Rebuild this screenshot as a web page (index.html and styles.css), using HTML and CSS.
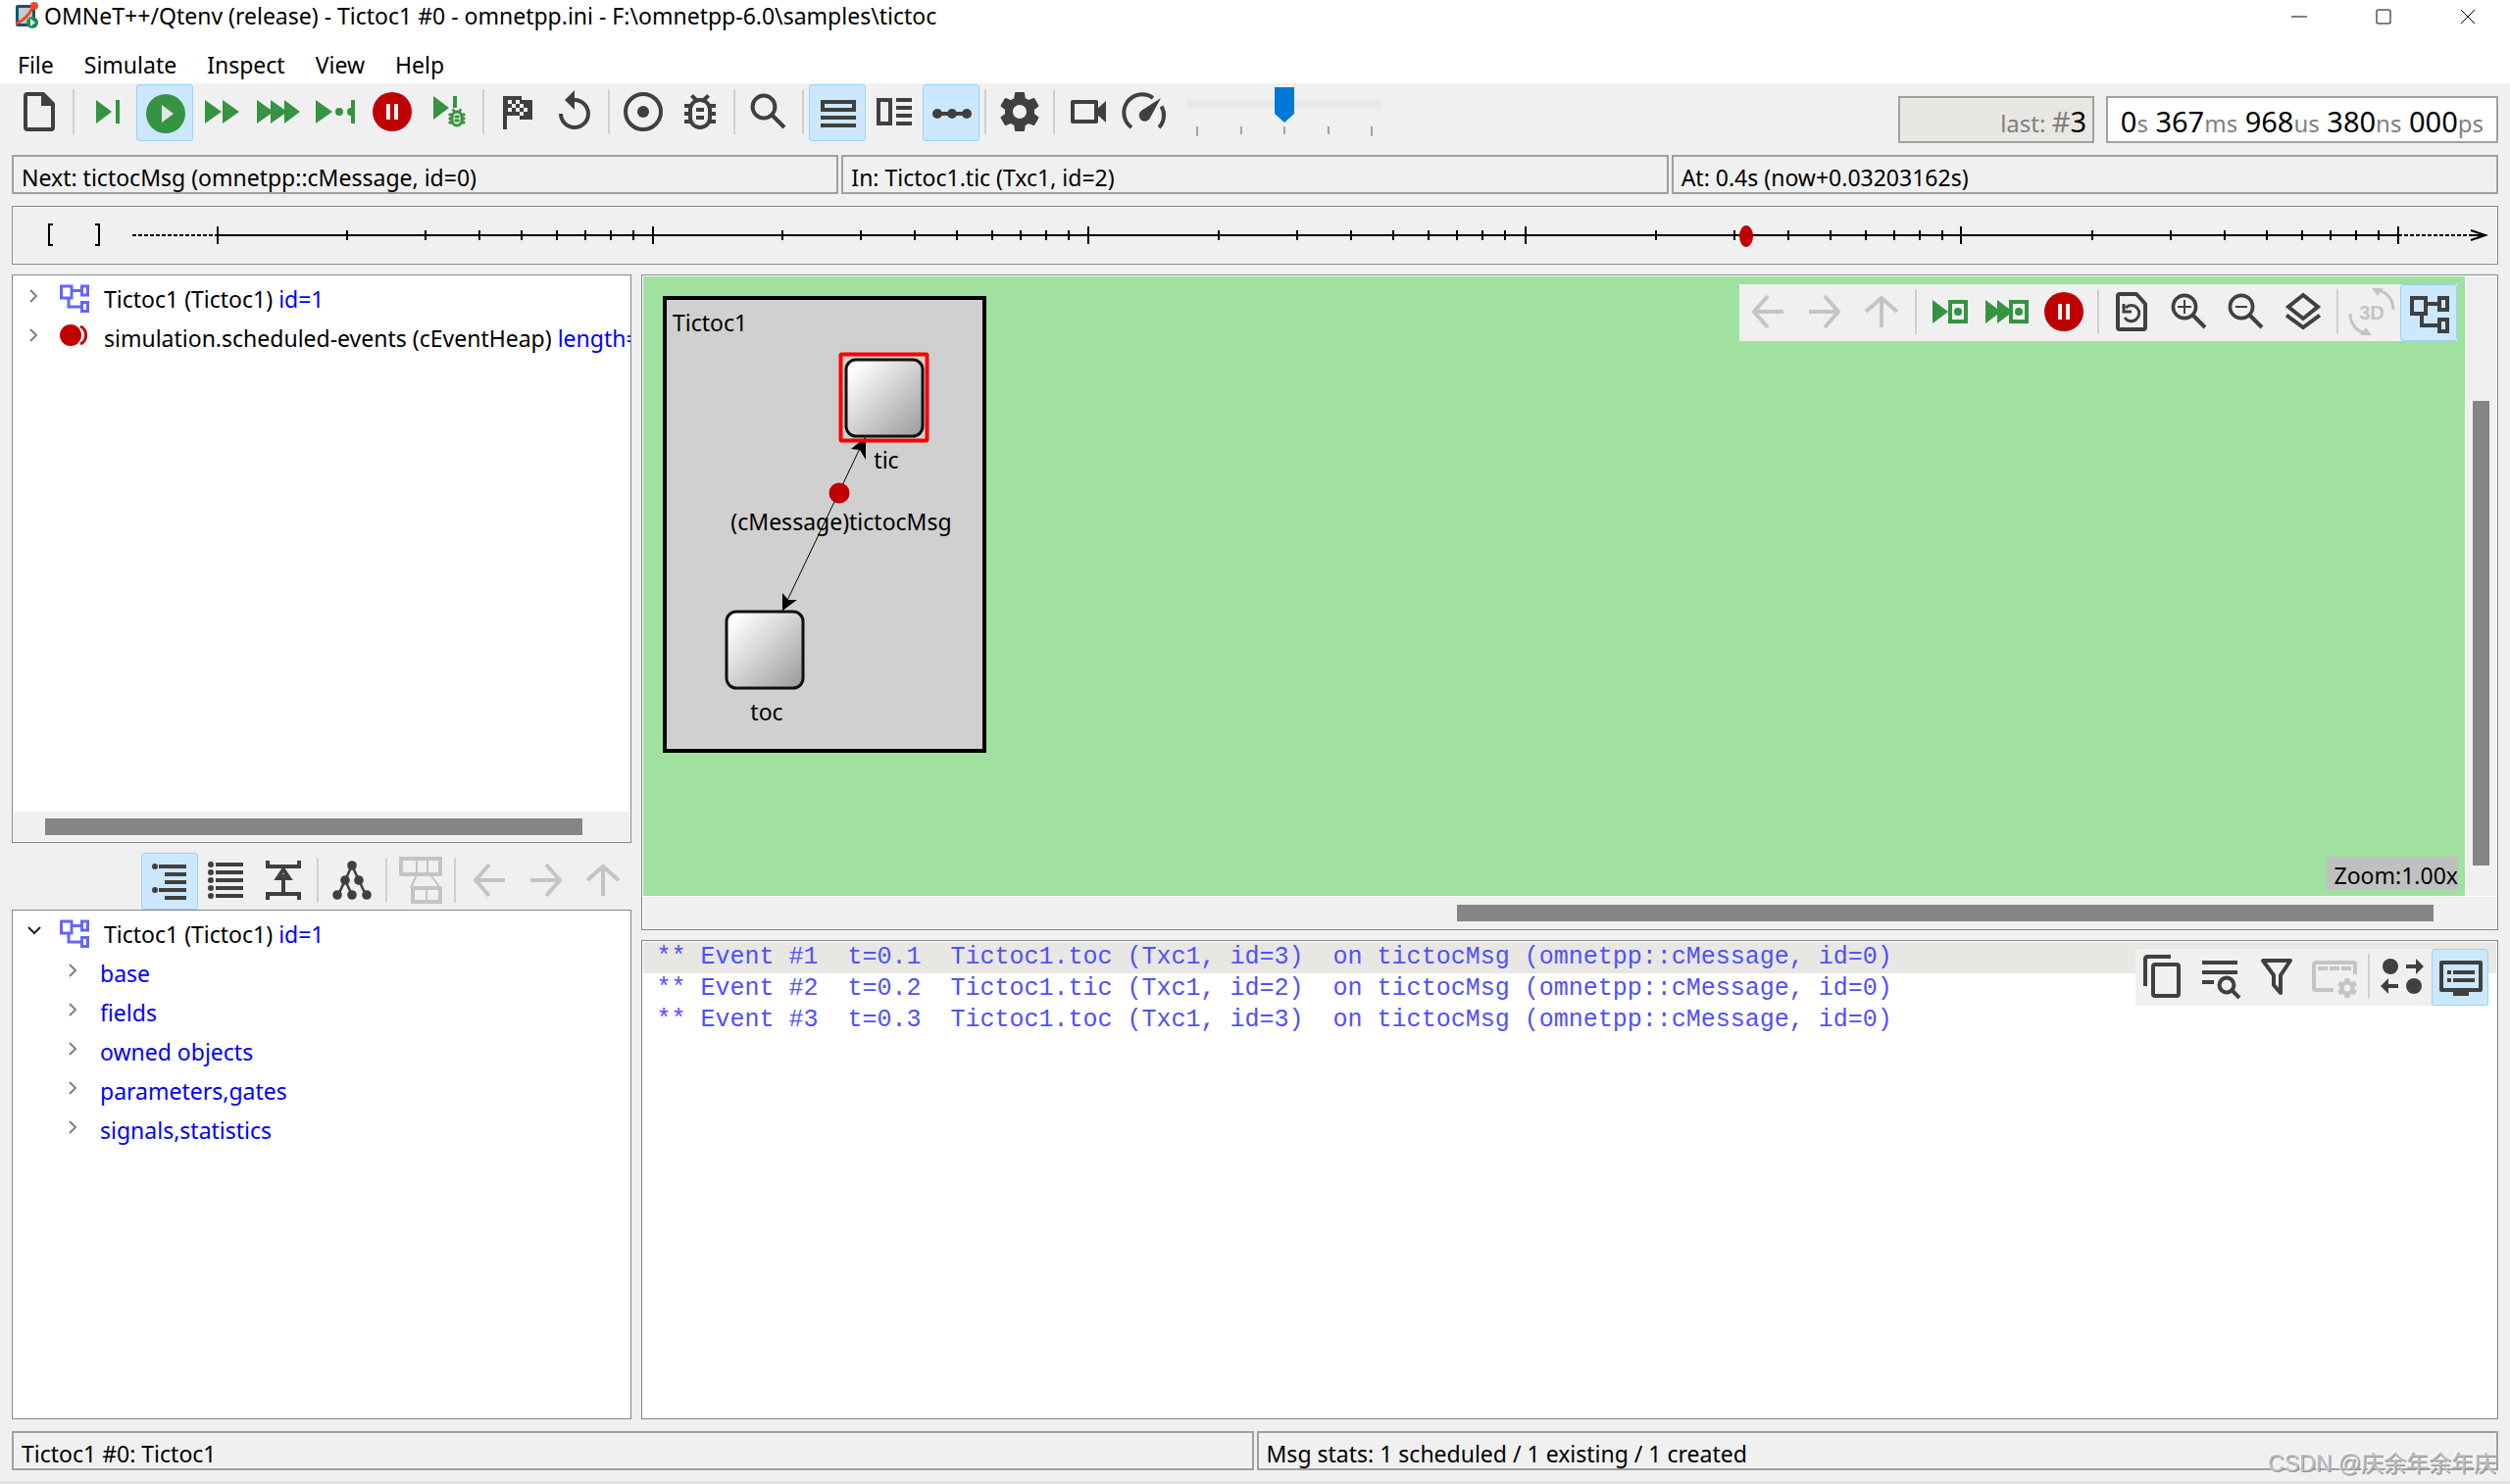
FILE: index.html
```html
<!DOCTYPE html>
<html lang="en">
<head>
<meta charset="utf-8">
<title>OMNeT++/Qtenv (release) - Tictoc1 #0</title>
<link rel="stylesheet" href="styles.css">
</head>
<body>
<svg class="defs" aria-hidden="true">
  <defs>
    <symbol id="module" viewBox="0 0 24 24"><path fill="none" stroke="currentColor" stroke-width="2" d="M3 4h7v8H3zM17 4h4v6h-4zM17 15h4v6h-4zM10 7h7M8 12v6h9"/></symbol>
    <symbol id="back" viewBox="0 0 24 24"><path fill="none" stroke="currentColor" stroke-width="2" d="M20 12H5M12 4l-7 8 7 8"/></symbol>
    <symbol id="forward" viewBox="0 0 24 24"><path fill="none" stroke="currentColor" stroke-width="2" d="M4 12h15M12 4l7 8-7 8"/></symbol>
    <symbol id="up" viewBox="0 0 24 24"><path fill="none" stroke="currentColor" stroke-width="2" d="M12 20V5M4 12l8-7 8 7"/></symbol>
    <symbol id="stop" viewBox="0 0 24 24"><circle cx="12" cy="12" r="10" fill="#c00000"/><path fill="#f0f0f0" d="M9 8h2v8H9zM13 8h2v8h-2z"/></symbol>
    <symbol id="gear" viewBox="0 0 24 24"><path fill="currentColor" d="M19.43 12.98c.04-.32.07-.64.07-.98s-.03-.66-.07-.98l2.11-1.65c.19-.15.24-.42.12-.64l-2-3.46c-.12-.22-.39-.3-.61-.22l-2.49 1c-.52-.4-1.08-.73-1.69-.98l-.38-2.65C14.46 2.18 14.25 2 14 2h-4c-.25 0-.46.18-.49.42l-.38 2.65c-.61.25-1.17.59-1.69.98l-2.49-1c-.23-.09-.49 0-.61.22l-2 3.46c-.13.22-.07.49.12.64l2.11 1.65c-.04.32-.07.65-.07.98s.03.66.07.98l-2.11 1.65c-.19.15-.24.42-.12.64l2 3.46c.12.22.39.3.61.22l2.49-1c.52.4 1.08.73 1.69.98l.38 2.65c.03.24.24.42.49.42h4c.25 0 .46-.18.49-.42l.38-2.65c.61-.25 1.17-.59 1.69-.98l2.49 1c.23.09.49 0 .61-.22l2-3.46c.12-.22.07-.49-.12-.64l-2.11-1.65zM12 15.5c-1.93 0-3.5-1.57-3.5-3.5s1.57-3.5 3.5-3.5 3.5 1.57 3.5 3.5-1.57 3.5-3.5 3.5z"/></symbol>
    <symbol id="bug" viewBox="0 0 24 24"><path fill="currentColor" d="M20 8h-2.81c-.45-.78-1.07-1.45-1.82-1.96L17 4.41 15.59 3l-2.17 2.17C12.96 5.06 12.49 5 12 5s-.96.06-1.41.17L8.41 3 7 4.41l1.62 1.63C7.88 6.55 7.26 7.22 6.81 8H4v2h2.09c-.05.33-.09.66-.09 1v1H4v2h2v1c0 .34.04.67.09 1H4v2h2.81c1.04 1.79 2.97 3 5.19 3s4.15-1.21 5.19-3H20v-2h-2.09c.05-.33.09-.66.09-1v-1h2v-2h-2v-1c0-.34-.04-.67-.09-1H20V8zm-4 7c0 2.21-1.79 4-4 4s-4-1.79-4-4v-4c0-2.21 1.79-4 4-4s4 1.79 4 4v4zm-6-1h4v2h-4v-2zm0-4h4v2h-4v-2z"/></symbol>
    <symbol id="chevron" viewBox="0 0 16 16"><path fill="none" stroke="currentColor" stroke-width="2" d="M4 2l6 6-6 6"/></symbol>
  </defs>
</svg>

<header class="titlebar">
  <svg class="app-icon" viewBox="0 0 26 28" aria-hidden="true"><rect x="2" y="3" width="20" height="22" rx="2" fill="#10556f"/><rect x="5" y="6" width="14" height="16" fill="#c4ccc8"/><path d="M2 22Q14 18 20 4" stroke="#f0452b" stroke-width="3" fill="none"/><circle cx="21" cy="4" r="4" fill="#f0452b"/><circle cx="19" cy="21" r="6" fill="#1d8a5c"/><path d="M17 17l5 4-5 4z" fill="#e8f4ec"/></svg>
  <h1 class="title">OMNeT++/Qtenv (release) - Tictoc1 #0 - omnetpp.ini - F:\omnetpp-6.0\samples\tictoc</h1>
  <div class="window-controls">
    <button aria-label="Minimize"><svg viewBox="0 0 16 16"><path d="M0 8h16"/></svg></button>
    <button aria-label="Maximize"><svg viewBox="0 0 16 16"><rect x="1" y="1" width="14" height="14" rx="1"/></svg></button>
    <button aria-label="Close"><svg viewBox="0 0 16 16"><path d="M1 1l14 14M15 1L1 15"/></svg></button>
  </div>
</header>

<nav class="menubar">
  <button>File</button><button>Simulate</button><button>Inspect</button><button>View</button><button>Help</button>
</nav>

<div class="topbar">
  <div class="toolbar">
    <button class="tool" aria-label="New run"><svg viewBox="0 0 24 24"><path fill="none" stroke="currentColor" stroke-width="2" stroke-linejoin="round" d="M14 3H6a1 1 0 0 0-1 1v16a1 1 0 0 0 1 1h12a1 1 0 0 0 1-1V8z"/><path fill="currentColor" d="M13 3v6h6z"/></svg></button>
    <span class="sep"></span>
    <button class="tool go" aria-label="Step"><svg viewBox="0 0 24 24"><path fill="currentColor" d="M6 18l8-6-8-6zM16 6h2v12h-2z"/></svg></button>
    <button class="tool go active" aria-label="Run"><svg viewBox="0 0 24 24"><circle cx="12" cy="12" r="10" fill="currentColor"/><path fill="#e4e4e4" d="M10 7.500l6 4.500-6 4.500z"/></svg></button>
    <button class="tool go" aria-label="Fast run"><svg viewBox="0 0 24 24"><path fill="currentColor" d="M3.500 18l8.500-6-8.500-6zM12.500 18l8.500-6-8.500-6z"/></svg></button>
    <button class="tool go" aria-label="Express run"><svg viewBox="0 0 24 24"><path fill="currentColor" d="M1 18l8.500-6L1 6zM8 18l8.500-6L8 6zM15 18l8-6-8-6z"/></svg></button>
    <button class="tool go" aria-label="Run until"><svg viewBox="0 0 24 24"><path fill="currentColor" d="M2 18l8.500-6L2 6zM20 6h2v12h-2v-4a2 2 0 0 1 0-4z"/><circle cx="14" cy="12" r="2" fill="currentColor"/></svg></button>
    <button class="tool" aria-label="Stop"><svg><use href="#stop"/></svg></button>
    <button class="tool go" aria-label="Debug next event"><svg viewBox="0 0 24 24"><path fill="currentColor" d="M4 16l8-6-8-6zM14 4h2v6h-2z"/><use href="#bug" x="10" y="9" width="12" height="12" stroke="currentColor" stroke-width="1"/></svg></button>
    <span class="sep"></span>
    <button class="tool" aria-label="Conclude simulation"><svg viewBox="0 0 24 24"><path fill="currentColor" d="M4.500 4H14v2h5.500v10H13v-2H6.500v7h-2z"/><path fill="#f0f0f0" d="M7 6h2v2H7zM11 6h2v2h-2zM9 8h2v2H9zM13 8h2v2h-2zM7 10h2v2H7zM11 10h2v2h-2zM15 10h2v2h-2zM13 12h2v2h-2z"/></svg></button>
    <button class="tool" aria-label="Rebuild network"><svg viewBox="0 0 24 24"><path fill="currentColor" d="M12 5V1L7 6l5 5V7c3.310 0 6 2.690 6 6s-2.690 6-6 6-6-2.690-6-6H4c0 4.420 3.580 8 8 8s8-3.580 8-8-3.580-8-8-8z"/></svg></button>
    <span class="sep"></span>
    <button class="tool" aria-label="Record event log"><svg viewBox="0 0 24 24"><circle cx="12" cy="12" r="9" fill="none" stroke="currentColor" stroke-width="2"/><circle cx="12" cy="12" r="3" fill="currentColor"/></svg></button>
    <button class="tool" aria-label="Debug on errors"><svg><use href="#bug"/></svg></button>
    <span class="sep"></span>
    <button class="tool" aria-label="Find"><svg viewBox="0 0 24 24"><path fill="none" stroke="currentColor" stroke-width="2" d="M14 14l6 6"/><circle cx="9.500" cy="9.500" r="5.700" fill="none" stroke="currentColor" stroke-width="2"/></svg></button>
    <span class="sep"></span>
    <button class="tool active" aria-label="Horizontal layout"><svg viewBox="0 0 24 24"><path fill="none" stroke="currentColor" stroke-width="2" d="M4 6h16v4H4zM3 14h18M3 18h18"/></svg></button>
    <button class="tool" aria-label="Vertical layout"><svg viewBox="0 0 24 24"><path fill="none" stroke="currentColor" stroke-width="2" d="M4 6h6v12H4zM13 6h8M13 10h8M13 14h8M13 18h8"/></svg></button>
    <button class="tool active" aria-label="Show timeline"><svg viewBox="0 0 24 24"><path stroke="currentColor" stroke-width="2" d="M3 12h18"/><g fill="currentColor"><circle cx="4.500" cy="12" r="2.500"/><circle cx="12" cy="12" r="2.500"/><circle cx="19.500" cy="12" r="2.500"/></g></svg></button>
    <span class="sep"></span>
    <button class="tool" aria-label="Preferences"><svg><use href="#gear"/></svg></button>
    <span class="sep"></span>
    <button class="tool" aria-label="Record video"><svg viewBox="0 0 24 24"><path fill="none" stroke="currentColor" stroke-width="2" stroke-linejoin="round" d="M4 7h12v10H4z"/><path fill="currentColor" d="M16 11l5-4.500v11L16 13z"/></svg></button>
    <button class="tool" aria-label="Animation parameters"><svg viewBox="0 0 24 24"><path fill="none" stroke="currentColor" stroke-width="2" d="M5 20A9 9 0 0 1 16 4.900M20.300 9.200A9 9 0 0 1 19 20"/><path fill="currentColor" d="M20 5l-5.300 9.800a3 3 0 1 1-4.400-3.500z"/></svg></button>
    <div class="speed">
      <input type="range" min="0" max="4" step="1" value="2" aria-label="Animation speed">
      <div class="ticks"><i></i><i></i><i></i><i></i><i></i></div>
    </div>
  </div>
  <div class="counters">
    <output class="counter last"><small>last: </small><span>#</span>3</output>
    <output class="counter time">0<small>s</small> 367<small>ms</small> 968<small>us</small> 380<small>ns</small> 000<small>ps</small></output>
  </div>
</div>

<div class="inforow three">
  <div class="field">Next: tictocMsg (omnetpp::cMessage, id=0)</div>
  <div class="field">In: Tictoc1.tic (Txc1, id=2)</div>
  <div class="field">At: 0.4s (now+0.03203162s)</div>
</div>

<div class="timeline">
  <svg viewBox="0 0 2534 58" preserveAspectRatio="none" role="img" aria-label="Future events timeline">
    <path fill="none" stroke="#000" stroke-width="2" d="M41 18h-4v21h4M84 18h4v21h-4"/>
    <path stroke="#000" stroke-width="2" stroke-dasharray="4 2" d="M122 29H209M2433 29H2512"/>
    <path fill="none" stroke="#000" stroke-width="2" d="M209 29H2433M2507 24l15 5-15 5M2508 29h12"/>
    <path stroke="#000" stroke-width="2" d="M209 20v18M653 20v18M1097 20v18M1543 20v18M1987 20v18M2433 20v18"/>
    <path id="decade" stroke="#000" stroke-width="2" d="M341 24v10M421 24v10M476 24v10M519 24v10M555 24v10M584 24v10M610 24v10M633 24v10"/>
    <use href="#decade" x="444"/><use href="#decade" x="889"/><use href="#decade" x="1335"/><use href="#decade" x="1780"/>
    <ellipse cx="1768" cy="30" rx="7" ry="11" fill="#c00000"/>
  </svg>
</div>

<main class="workspace">
  <section class="side">
    <div class="panel objects">
      <ul class="tree">
        <li><button class="twist" aria-label="Expand"><svg><use href="#chevron"/></svg></button><svg class="kind"><use href="#module"/></svg><span>Tictoc1 (Tictoc1) <b>id=1</b></span></li>
        <li><button class="twist" aria-label="Expand"><svg><use href="#chevron"/></svg></button><svg class="kind" viewBox="0 0 36 36"><circle cx="14" cy="16" r="11" fill="#c00000"/><path d="M24 7a10 10 0 0 1 0 18" fill="none" stroke="#c00000" stroke-width="3"/></svg><span>simulation.scheduled-events (cEventHeap) <b>length=1</b></span></li>
      </ul>
      <div class="hscroll"><div class="thumb"></div></div>
    </div>
    <div class="toolbar side-tools">
      <button class="tool active" aria-label="Grouped mode"><svg viewBox="0 0 24 24"><path fill="none" stroke="currentColor" stroke-width="2" d="M6 4h14M9 8h11M9 12h11M6 16h14M9 20h11"/><circle cx="4" cy="4" r="1.500" fill="currentColor"/><circle cx="4" cy="16" r="1.500" fill="currentColor"/></svg></button>
      <button class="tool" aria-label="Flat mode"><svg viewBox="0 0 24 24"><path fill="none" stroke="currentColor" stroke-width="2" d="M6.500 4h14M6.500 8h14M6.500 12h14M6.500 16h14M6.500 20h14"/><g fill="currentColor"><circle cx="4" cy="4" r="1.500"/><circle cx="4" cy="8" r="1.500"/><circle cx="4" cy="12" r="1.500"/><circle cx="4" cy="16" r="1.500"/><circle cx="4" cy="20" r="1.500"/></g></svg></button>
      <button class="tool" aria-label="Children mode"><svg viewBox="0 0 24 24"><path fill="none" stroke="currentColor" stroke-width="2" d="M4 2v3h16V2M4 22v-3h16v3M12 9v10M12 6.500L9 11h6z"/></svg></button>
      <span class="sep"></span>
      <button class="tool" aria-label="Inheritance mode"><svg viewBox="0 0 24 24"><path fill="none" stroke="currentColor" stroke-width="1.300" d="M12 4.500L8.500 12 5 19.500M12 4.500l3.500 7.500 3.500 7.500M8.500 12l3.500 7.500"/><g fill="currentColor"><circle cx="12" cy="4.500" r="2.400"/><circle cx="8.500" cy="12" r="2.400"/><circle cx="15.500" cy="12" r="2.400"/><circle cx="4.500" cy="19.500" r="2.400"/><circle cx="12" cy="19.500" r="2.400"/><circle cx="19.500" cy="19.500" r="2.400"/></g></svg></button>
      <span class="sep"></span>
      <button class="tool" disabled aria-label="Packet mode"><svg viewBox="0 0 24 24"><path fill="none" stroke="currentColor" stroke-width="2" d="M2 1h20v8H2zM8 16h14v7H8z"/><path fill="none" stroke="currentColor" d="M10 1v8M15.500 1v8M15 16v7M10 9l-3 7M17 9l5 7"/></svg></button>
      <span class="sep"></span>
      <button class="tool" disabled aria-label="Back"><svg><use href="#back"/></svg></button>
      <button class="tool" disabled aria-label="Forward"><svg><use href="#forward"/></svg></button>
      <button class="tool" disabled aria-label="Up"><svg><use href="#up"/></svg></button>
    </div>
    <div class="panel details">
      <ul class="tree">
        <li class="open"><button class="twist" aria-label="Collapse"><svg><use href="#chevron"/></svg></button><svg class="kind"><use href="#module"/></svg><span>Tictoc1 (Tictoc1) <b>id=1</b></span></li>
        <li class="child"><button class="twist" aria-label="Expand"><svg><use href="#chevron"/></svg></button><b>base</b></li>
        <li class="child"><button class="twist" aria-label="Expand"><svg><use href="#chevron"/></svg></button><b>fields</b></li>
        <li class="child"><button class="twist" aria-label="Expand"><svg><use href="#chevron"/></svg></button><b>owned objects</b></li>
        <li class="child"><button class="twist" aria-label="Expand"><svg><use href="#chevron"/></svg></button><b>parameters,gates</b></li>
        <li class="child"><button class="twist" aria-label="Expand"><svg><use href="#chevron"/></svg></button><b>signals,statistics</b></li>
      </ul>
    </div>
  </section>

  <section class="content">
    <div class="panel network">
      <div class="canvas">
        <svg class="diagram" viewBox="0 0 370 500" role="img" aria-label="Tictoc1 network">
          <defs>
            <linearGradient id="box" x1="0" y1="0" x2="1" y2="1"><stop offset=".1" stop-color="#fff"/><stop offset="1" stop-color="#999"/></linearGradient>
          </defs>
          <rect x="22" y="22" width="326" height="462" fill="#d0d0d0" stroke="#000" stroke-width="4"/>
          <g fill="url(#box)" stroke="#111" stroke-width="3"><rect x="207" y="85" width="78" height="78" rx="10"/><rect x="85" y="342" width="78" height="78" rx="10"/></g>
          <path stroke="#000" stroke-width="1" d="M142 341L226 165"/>
          <path d="M227 164l-15 12 9 1 6 10zM142 341l0-18 6 7 9 0z"/>
          <rect x="201.500" y="79.500" width="88" height="88" rx="1" fill="none" stroke="#f00" stroke-width="4"/>
          <circle cx="200" cy="221" r="10.500" fill="#c00000"/>
          <g class="labels"><text x="30" y="56">Tictoc1</text><text x="248" y="196" text-anchor="middle">tic</text><text x="202" y="259" text-anchor="middle">(cMessage)tictocMsg</text><text x="126" y="453" text-anchor="middle">toc</text></g>
        </svg>
        <div class="toolbar floating">
          <button class="tool" disabled aria-label="Back"><svg><use href="#back"/></svg></button>
          <button class="tool" disabled aria-label="Forward"><svg><use href="#forward"/></svg></button>
          <button class="tool" disabled aria-label="Up"><svg><use href="#up"/></svg></button>
          <span class="sep"></span>
          <button class="tool go" aria-label="Run until next event in module"><svg viewBox="0 0 24 24"><path fill="currentColor" d="M3 18l8-6-8-6z"/><path fill="none" stroke="currentColor" stroke-width="2" d="M12 7h8v10h-8z"/><circle cx="16" cy="12" r="2" fill="currentColor"/></svg></button>
          <button class="tool go" aria-label="Fast run in module"><svg viewBox="0 0 24 24"><path fill="currentColor" d="M1 18l8-6-8-6zM7 18l8-6-8-6z"/><path fill="none" stroke="currentColor" stroke-width="2" d="M14 7h8v10h-8z"/><circle cx="18" cy="12" r="2" fill="currentColor"/></svg></button>
          <button class="tool" aria-label="Stop"><svg><use href="#stop"/></svg></button>
          <span class="sep"></span>
          <button class="tool" aria-label="Relayout"><svg viewBox="0 0 24 24"><path fill="none" stroke="currentColor" stroke-width="2" stroke-linejoin="round" d="M14 3H5.500A1 1 0 0 0 4.500 4v16a1 1 0 0 0 1 1h12a1 1 0 0 0 1-1V8z"/><path fill="none" stroke="currentColor" stroke-width="1.500" d="M8.500 10a4 4 0 1 1-.5 5M7.500 8v4h4"/></svg></button>
          <button class="tool" aria-label="Zoom in"><svg viewBox="0 0 24 24"><circle cx="9.500" cy="9.500" r="5.800" fill="none" stroke="currentColor" stroke-width="1.800"/><path fill="none" stroke="currentColor" stroke-width="2" d="M14 14l6 6"/><path stroke="currentColor" d="M6 9.500h7M9.500 6v7"/></svg></button>
          <button class="tool" aria-label="Zoom out"><svg viewBox="0 0 24 24"><circle cx="9.500" cy="9.500" r="5.800" fill="none" stroke="currentColor" stroke-width="1.800"/><path fill="none" stroke="currentColor" stroke-width="2" d="M14 14l6 6"/><path stroke="currentColor" d="M6.500 9.500h6"/></svg></button>
          <button class="tool" aria-label="Layers"><svg viewBox="0 0 24 24"><path fill="none" stroke="currentColor" stroke-width="2" d="M12 3.500L19.500 9.500 12 15.500 4.500 9.500zM3.500 13.800L12 20l8.500-6.200"/></svg></button>
          <span class="sep"></span>
          <button class="tool" disabled aria-label="3D view"><svg viewBox="0 0 24 24"><path fill="none" stroke="currentColor" stroke-width="1.500" d="M1 13c0 5 3 9 8 10M23 11c0-5-3-9-8-10"/><path fill="currentColor" d="M12 0h6l-3 4zM12 24H6l3-4z"/><text class="three-d" x="12" y="16" text-anchor="middle">3D</text></svg></button>
          <button class="tool active" aria-label="Network view"><svg><use href="#module"/></svg></button>
        </div>
        <div class="zoom-label">Zoom:1.00x</div>
      </div>
      <div class="vscroll"><div class="thumb"></div></div>
      <div class="hscroll"><div class="thumb"></div></div>
    </div>
    <div class="panel log">
      <pre class="line current">** Event #1  t=0.1  Tictoc1.toc (Txc1, id=3)  on tictocMsg (omnetpp::cMessage, id=0)</pre>
      <pre class="line">** Event #2  t=0.2  Tictoc1.tic (Txc1, id=2)  on tictocMsg (omnetpp::cMessage, id=0)</pre>
      <pre class="line">** Event #3  t=0.3  Tictoc1.toc (Txc1, id=3)  on tictocMsg (omnetpp::cMessage, id=0)</pre>
      <div class="toolbar floating">
        <button class="tool" aria-label="Copy"><svg viewBox="0 0 24 24"><path fill="none" stroke="currentColor" stroke-width="2" stroke-linejoin="round" d="M15.500 2h-12a1 1 0 0 0-1 1v14M7.500 6h11a1 1 0 0 1 1 1v14a1 1 0 0 1-1 1h-11a1 1 0 0 1-1-1V7a1 1 0 0 1 1-1z"/></svg></button>
        <button class="tool" aria-label="Find in log"><svg viewBox="0 0 24 24"><path fill="none" stroke="currentColor" stroke-width="2" d="M2.500 5h18M2.500 10h18M2.500 15h6"/><circle cx="15" cy="16.500" r="5.500" fill="#f0f0f0"/><circle cx="15" cy="16.500" r="3.700" fill="none" stroke="currentColor" stroke-width="2"/><path stroke="currentColor" stroke-width="2" d="M17.500 19l4 4"/></svg></button>
        <button class="tool" aria-label="Filter"><svg viewBox="0 0 24 24"><path fill="none" stroke="currentColor" stroke-width="2" stroke-linejoin="round" d="M4.500 4h14L13.500 11.500V20.500L10 16.500v-5z"/></svg></button>
        <button class="tool" disabled aria-label="Configure columns"><svg viewBox="0 0 24 24"><path fill="none" stroke="currentColor" stroke-width="2" d="M11.500 19H2.500a1 1 0 0 1-1-1V6a1 1 0 0 1 1-1h19a1 1 0 0 1 1 1v5"/><path stroke="currentColor" stroke-width="2" stroke-dasharray="5 1" d="M3.500 8h17"/><use href="#gear" x="12.500" y="12" width="12" height="12"/></svg></button>
        <span class="sep"></span>
        <button class="tool" aria-label="Message view"><svg viewBox="0 0 24 24"><g fill="currentColor"><circle cx="5.500" cy="7" r="4"/><circle cx="17.500" cy="17" r="4"/><path d="M13.500 6h5V3l4 4-4 4V8h-5zM9.500 16h-5v-3l-4 4 4 4v-3h5z"/></g></svg></button>
        <button class="tool active" aria-label="Log view"><svg viewBox="0 0 24 24"><path fill="none" stroke="currentColor" stroke-width="2" stroke-linejoin="round" d="M2 4h20v14H2z"/><path fill="none" stroke="currentColor" stroke-width="2" d="M5 9h2M8 9h11M5 13h2M8 13h11M8 20h8"/></svg></button>
      </div>
    </div>
  </section>
</main>

<footer class="inforow status">
  <div class="field">Tictoc1 #0: Tictoc1</div>
  <div class="field">Msg stats: 1 scheduled / 1 existing / 1 created</div>
  <div class="watermark">CSDN @庆余年余年庆</div>
</footer>
</body>
</html>
```
FILE: styles.css
```css
* { box-sizing: border-box; }

body {
  margin: 0;
  min-height: 100vh;
  display: flex;
  flex-direction: column;
  background: #f0f0f0;
  border-bottom: 3px solid #e4e4e4;
  color: #000;
  font-family: "Noto Sans", "Open Sans", sans-serif;
  font-size: 23px;
  line-height: 32px;
}

button {
  border: 0;
  padding: 0;
  background: none;
  color: inherit;
  font: inherit;
}

.defs { position: absolute; width: 0; height: 0; }

/* Title bar and menu */
.titlebar {
  display: flex;
  align-items: center;
  height: 48px;
  padding: 0 0 16px 14px;
  background: #fff;
}
.app-icon { width: 26px; height: 28px; margin-right: 5px; }
.title { flex: 1; margin: 0; font-size: 23px; font-weight: 400; }
.window-controls { display: flex; }
.window-controls button { width: 86px; height: 32px; }
.window-controls svg { width: 16px; height: 16px; fill: none; stroke: #000; stroke-width: 1; }
.menubar {
  display: flex;
  gap: 31px;
  height: 37px;
  padding: 2px 18px 3px;
  background: #fff;
}

/* Toolbars */
.topbar {
  display: flex;
  justify-content: space-between;
  padding: 1px 12px 0 11px;
  height: 73px;
}
.toolbar { display: flex; height: 58px; }
.tool {
  flex: none;
  display: grid;
  place-items: center;
  width: 58px;
  height: 58px;
  padding-bottom: 2px;
  border: 1px solid transparent;
  border-radius: 3px;
  color: #404040;
}
.tool svg { width: 48px; height: 48px; overflow: visible; }
.tool.go { color: #369341; }
.tool.active { padding: 2px 0 0 2px; background: #cce8ff; border-color: #99d1ff; }
.tool:disabled { color: #c4c4c4; }
.sep { width: 2px; height: 46px; margin: 5px; background: #d0d0d0; }
.three-d { font: bold 10px "Liberation Sans", sans-serif; fill: currentColor; }

.speed { width: 200px; margin-left: 13px; padding-top: 3px; }
.speed input {
  display: block;
  width: 100%;
  height: 36px;
  margin: 0;
  appearance: none;
  background: linear-gradient(#e7eaea, #e7eaea) 0 13px / 100% 8px no-repeat;
}
.speed input::-webkit-slider-runnable-track { height: 36px; }
.speed input::-webkit-slider-thumb {
  appearance: none;
  width: 20px;
  height: 36px;
  background: #0078d7;
  clip-path: polygon(0 0, 100% 0, 100% 75%, 50% 100%, 0 75%);
}
.ticks { display: flex; justify-content: space-between; padding: 4px 10px 0; }
.ticks i { width: 2px; height: 8px; background: #a8a498; }
.ticks i:first-child, .ticks i:last-child { height: 10px; }

.counters { display: flex; gap: 12px; padding-top: 12px; }
.counter {
  height: 48px;
  padding: 4px 6px 0;
  border: 2px solid #a0a0a0;
  font-size: 29px;
  line-height: 40px;
  text-align: right;
  white-space: pre;
}
.counter small, .counter span { color: #808080; }
.counter small { font-size: 24px; }
.last { width: 200px; background: #e8e7e3; }
.time { width: 400px; background: #fff; padding-right: 13px; }

/* Sunken text fields */
.inforow { display: grid; gap: 3px; padding: 0 12px; }
.three { grid-template-columns: repeat(3, minmax(0, 1fr)); }
.field {
  height: 40px;
  padding: 5px 8px 0;
  border: 2px solid #a0a0a0;
  white-space: nowrap;
}
.status {
  position: relative;
  grid-template-columns: repeat(2, minmax(0, 1fr));
  padding-bottom: 11px;
}
.watermark {
  position: absolute;
  right: 14px;
  bottom: 2px;
  color: #c0c0c0;
  font: 23px/32px "Liberation Sans", "Noto Sans CJK SC", sans-serif;
  text-shadow: 1px 1px 0 #909090, -1px -1px 0 #fff;
}

.timeline {
  height: 60px;
  margin: 12px 12px 10px;
  border: 1px solid #828790;
  box-shadow: inset 0 0 0 1px #fff;
}
.timeline svg { display: block; width: 100%; height: 58px; }

/* Main area */
.workspace {
  flex: 1;
  display: grid;
  grid-template-columns: minmax(0, 1fr) minmax(0, 3fr);
  gap: 10px;
  padding: 0 12px 12px;
}
.side, .content { display: flex; flex-direction: column; }
.content { gap: 10px; }
.panel {
  position: relative;
  border: 1px solid #828790;
  background: #fff;
}
.objects { flex: 580 1 0; display: flex; flex-direction: column; }
.details { flex: 520 1 0; }
.network { flex: 670 1 0; }
.log { flex: 488 1 0; }
.side-tools { justify-content: flex-end; height: 68px; padding-top: 10px; }

.tree {
  flex: 1;
  margin: 0;
  padding: 5px 0 0 8px;
  list-style: none;
  overflow: hidden;
}
.tree li { display: flex; height: 40px; line-height: 38px; white-space: nowrap; }
.tree li > * { flex: none; }
.tree b { font-weight: 400; color: #00f; }
.twist { width: 28px; height: 32px; color: #808080; display: grid; place-items: center; }
.twist svg { width: 16px; height: 16px; }
.open .twist { color: #222; transform: rotate(90deg); }
.kind { width: 36px; height: 36px; margin: 0 12px 0 9px; color: #6464ff; }
.child { padding-left: 40px; }
.child b { margin-left: 13px; }

.hscroll { height: 32px; padding: 7px 48px 6px 32px; background: #f0f0f0; border: 1px solid #fff; }
.thumb { height: 100%; background: #858585; }

.network {
  display: grid;
  grid-template-columns: minmax(0, 1fr) 33px;
  grid-template-rows: minmax(0, 1fr) 34px;
  padding: 1px 0 0 1px;
}
.canvas { position: relative; background: #a0e1a0; overflow: hidden; }
.diagram { position: absolute; left: 0; top: 0; width: 370px; height: 500px; }
.labels { font-size: 23px; }
.vscroll { padding: 127px 8px 31px 7px; background: #f0f0f0; border-left: 1px solid #fff; }
.network .hscroll { grid-column: 1 / -1; height: 34px; padding: 8px 64px 7px 830px; border-left: 0; }
.floating { position: absolute; background: #f0f0f0; top: 8px; right: 8px; }
.zoom-label {
  position: absolute;
  right: 7px;
  bottom: 6px;
  height: 34px;
  padding: 3px 0 0 8px;
  background: #c0c0c0;
}

.log { padding: 1px; }
.log .floating { right: 9px; }
.line {
  margin: 0;
  padding-left: 14px;
  color: #5050ff;
  font: 25px/32px "Liberation Mono", monospace;
}
.current { background: #e8e7e3; }
```
